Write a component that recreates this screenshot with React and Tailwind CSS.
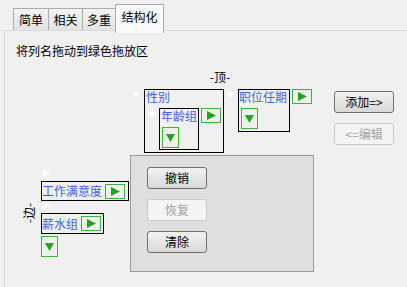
import React from 'react';

const FONT = { fontFamily: '"Noto Sans CJK SC", "Noto Sans", sans-serif' };

function DownWhite() {
  return (
    <svg width="8" height="6" viewBox="0 0 8 6" className="block shrink-0">
      <polygon points="0,0 8,0 4,6" fill="#ffffff" />
    </svg>
  );
}

function RightWhite() {
  return (
    <svg width="7" height="8" viewBox="0 0 7 8" className="block shrink-0">
      <polygon points="0,0 7,4 0,8" fill="#ffffff" />
    </svg>
  );
}

// green drop buttons
function GreenRight() {
  return (
    <div className="w-[20px] h-[15px] shrink-0 border border-[#3cb43c] flex items-center justify-center">
      <svg width="9" height="9" viewBox="0 0 9 9" className="block">
        <polygon points="0,0 9,4.5 0,9" fill="#1fa51f" />
      </svg>
    </div>
  );
}

function GreenDown() {
  return (
    <div className="w-[17px] h-[21px] shrink-0 border border-[#3cb43c] flex items-center justify-center">
      <svg width="9" height="8" viewBox="0 0 9 8" className="block">
        <polygon points="0,0 9,0 4.5,8" fill="#1fa51f" />
      </svg>
    </div>
  );
}

function WinButton({ children, disabled }) {
  return (
    <div
      className={`w-[60px] h-[22px] rounded-[3px] border flex items-center justify-center text-[12px] leading-none ${
        disabled
          ? 'border-[#c8c8c8] bg-[#f4f4f4] text-[#a3a3a3]'
          : 'border-[#707070] bg-gradient-to-b from-[#f2f2f2] to-[#d9d9d9] text-black'
      }`}
    >
      {children}
    </div>
  );
}

function Tab({ label, active, className }) {
  if (active) {
    return (
      <div
        className={`relative z-10 -mb-[3px] h-[29px] border border-b-0 border-[#acacac] bg-[#f9f9f9] flex items-start justify-center pt-[4px] text-[12px] leading-[16px] ${className}`}
      >
        {label}
      </div>
    );
  }
  return (
    <div
      className={`h-[22px] border border-b-0 border-[#acacac] bg-gradient-to-b from-[#f3f3f3] to-[#e3e3e3] flex items-center justify-center text-[12px] leading-none ${className}`}
    >
      {label}
    </div>
  );
}

const label = 'text-[12px] leading-[14px] text-[#3f63f5] whitespace-nowrap';

export default function App() {
  return (
    <div className="w-[407px] h-[287px] bg-[#f0f0f0] overflow-hidden text-black" style={FONT}>
      {/* tab strip */}
      <div className="flex items-end h-[30px] pl-[13px]">
        <Tab label="简单" className="w-[36px]" />
        <Tab label="相关" className="w-[35px] -ml-px" />
        <Tab label="多重" className="w-[34px] -ml-px" />
        <Tab label="结构化" active className="w-[49px] -ml-px" />
      </div>

      {/* pane */}
      <div className="ml-[4px] h-[257px] border-t border-l border-[#d9d9d9]">
        <div className="ml-[11px] mt-[12px] text-[12px] leading-[16px]">将列名拖动到绿色拖放区</div>

        {/* top area */}
        <div className="flex h-[96px]">
          <div className="w-[127px] shrink-0" />
          <div className="w-[180px] shrink-0 flex flex-col">
            <div className="mt-[11px] pr-[4px] text-center text-[12px] leading-[14px]">-顶-</div>
            <div className="mt-[5px] flex items-start">
              {/* 性别 */}
              <div className="mt-[3px]"><DownWhite /></div>
              <div className="ml-[4px] w-[80px] h-[64px] border border-black">
                <div className={`pl-[1px] ${label}`}>性别</div>
                <div className="mt-[4px] ml-[3px] flex items-start">
                  <div className="mt-[4px]"><DownWhite /></div>
                  <div className="ml-[3px] w-[40px] h-[42px] border border-black">
                    <div className={`pl-[1px] ${label}`}>年龄组</div>
                    <div className="mt-[4px] ml-[2px]"><GreenDown /></div>
                  </div>
                  <div className="ml-[2px]"><GreenRight /></div>
                </div>
              </div>
              {/* 职位任期 */}
              <div className="ml-[3px] mt-[3px]"><DownWhite /></div>
              <div className="ml-[3px] w-[52px] h-[43px] border border-black">
                <div className={label}>职位任期</div>
                <div className="mt-[4px] ml-[2px]"><GreenDown /></div>
              </div>
              <div className="ml-[2px]"><GreenRight /></div>
            </div>
          </div>
          <div className="ml-[22px] mt-[32px] flex flex-col gap-[10px]">
            <WinButton>添加=&gt;</WinButton>
            <WinButton disabled>&lt;=编辑</WinButton>
          </div>
        </div>

        {/* bottom area */}
        <div className="flex">
          <div className="w-[125px] shrink-0 flex">
            <div className="w-[36px] h-[116px] pl-[12px] flex items-center justify-center">
              <div className="-rotate-90 whitespace-nowrap text-[12px] leading-[14px]">-边-</div>
            </div>
            <div className="flex flex-col items-start pt-[14px]">
              <div className="ml-[2px]"><RightWhite /></div>
              <div className="mt-[4px] w-[88px] h-[20px] border border-black flex items-center">
                <div className={label}>工作满意度</div>
                <div className="ml-[3px]"><GreenRight /></div>
              </div>
              <div className="ml-[2px] mt-[1px]"><RightWhite /></div>
              <div className="mt-[3px] w-[63px] h-[21px] border border-black flex items-center">
                <div className={label}>薪水组</div>
                <div className="ml-[3px]"><GreenRight /></div>
              </div>
              <div className="mt-[2px]"><GreenDown /></div>
            </div>
          </div>
          <div className="w-[184px] h-[117px] border border-[#9a9a9a] bg-[#dfdfdf] pl-[16px] pt-[11px] flex flex-col gap-[10px]">
            <WinButton>撤销</WinButton>
            <WinButton disabled>恢复</WinButton>
            <WinButton>清除</WinButton>
          </div>
        </div>
      </div>
    </div>
  );
}
